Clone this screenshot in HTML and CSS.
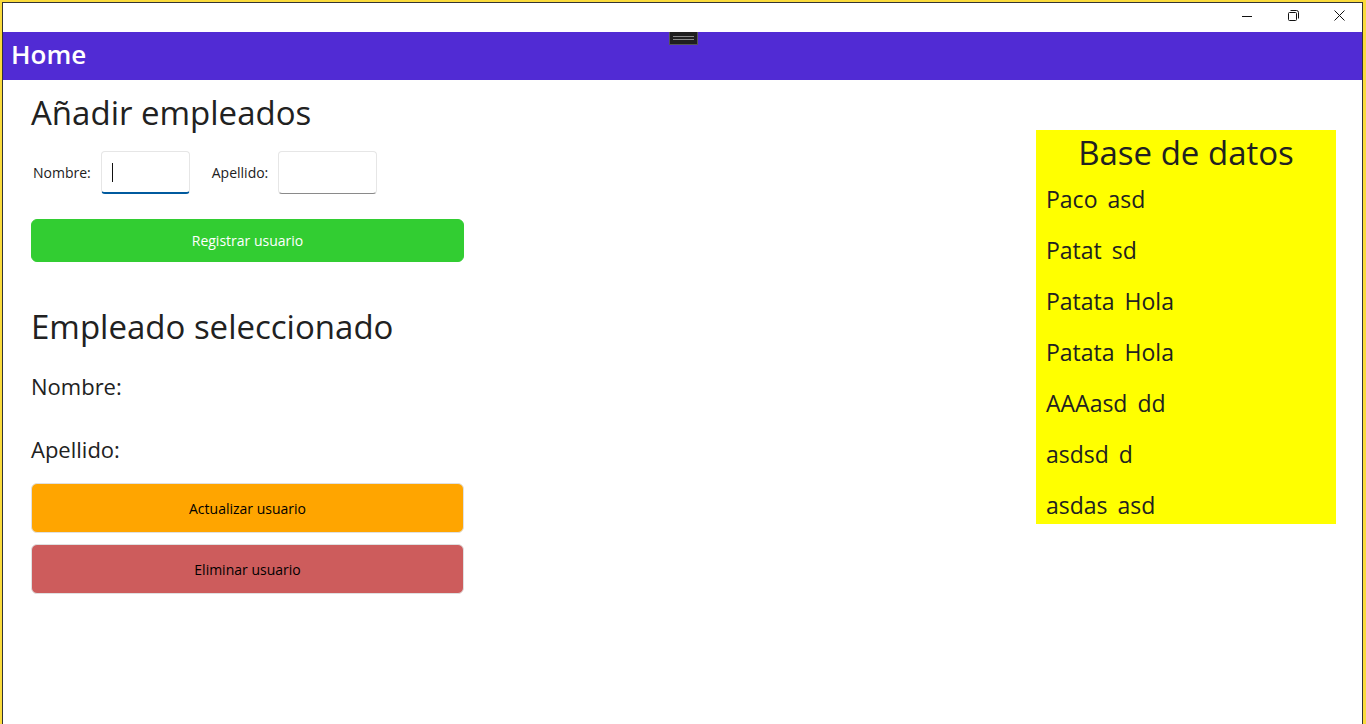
FILE: index.html
```html
<!DOCTYPE html>
<html lang="es">
<head>
<meta charset="utf-8">
<title>Home</title>
<link rel="stylesheet" href="styles.css">
</head>
<body>
<div class="frame">
  <div class="window">
    <div class="titlebar">
      <div class="controls">
        <span class="ctl">
          <svg width="10" height="10" viewBox="0 0 10 10"><path d="M0 5.5h10" stroke="#111" stroke-width="1"/></svg>
        </span>
        <span class="ctl">
          <svg width="11" height="11" viewBox="0 0 11 11" fill="none" stroke="#111" stroke-width="1"><rect x="0.5" y="2.5" width="8" height="8" rx="1"/><path d="M2.5 0.5h6a2 2 0 0 1 2 2v6"/></svg>
        </span>
        <span class="ctl">
          <svg width="11" height="11" viewBox="0 0 11 11" fill="none" stroke="#111" stroke-width="1"><path d="M0.5 0.5l10 10M10.5 0.5l-10 10"/></svg>
        </span>
      </div>
    </div>
    <div class="navbar">
      <span class="nav-title">Home</span>
      <span class="handle"><span class="grip"></span></span>
    </div>
    <div class="content">
      <div class="left">
        <h1 class="heading">Añadir empleados</h1>
        <div class="form-row">
          <label class="lbl">Nombre:</label>
          <div class="input focused"><span class="caret"></span></div>
          <label class="lbl lbl2">Apellido:</label>
          <div class="input wide"></div>
        </div>
        <button class="btn btn-green">Registrar usuario</button>
        <h1 class="heading heading2">Empleado seleccionado</h1>
        <p class="field">Nombre:</p>
        <p class="field field2">Apellido:</p>
        <button class="btn btn-tall btn-orange">Actualizar usuario</button>
        <button class="btn btn-tall btn-red">Eliminar usuario</button>
      </div>
      <div class="db">
        <div class="db-title">Base de datos</div>
        <ul class="db-list">
          <li><span>Paco</span><span>asd</span></li>
          <li><span>Patat</span><span>sd</span></li>
          <li><span>Patata</span><span>Hola</span></li>
          <li><span>Patata</span><span>Hola</span></li>
          <li><span>AAAasd</span><span>dd</span></li>
          <li><span>asdsd</span><span>d</span></li>
          <li><span>asdas</span><span>asd</span></li>
        </ul>
      </div>
    </div>
  </div>
</div>
</body>
</html>
```
FILE: styles.css
```css
* { box-sizing: border-box; }
html, body { margin: 0; padding: 0; }
body {
  width: 1366px;
  height: 724px;
  overflow: hidden;
  background: #fadb3c;
  font-family: "Open Sans", "Noto Sans", sans-serif;
  color: #212121;
}
.frame {
  height: 724px;
  padding: 2px 3px 0 2px;
}
.window {
  height: 100%;
  background: #fff;
  border-top: 1px solid #333;
  border-left: 1px solid #333;
  border-right: 1px solid #333;
  display: flex;
  flex-direction: column;
}
.titlebar {
  height: 29px;
  display: flex;
  justify-content: flex-end;
}
.controls { display: flex; }
.ctl {
  width: 46px;
  height: 29px;
  display: flex;
  align-items: center;
  justify-content: center;
}
.ctl svg { margin-top: -4px; }
.navbar {
  height: 48px;
  background: #512bd4;
  display: flex;
  align-items: center;
  padding-left: 8px;
  position: relative;
}
.nav-title {
  color: #fff;
  font-size: 26px;
  font-weight: 600;
  margin-top: -5px;
}
.handle {
  position: absolute;
  left: 666px;
  top: 0;
  width: 29px;
  height: 13px;
  background: #1f1f1f;
  border: 1px solid #555;
  border-top: none;
  display: flex;
  align-items: center;
  justify-content: center;
}
.grip {
  width: 21px;
  height: 4px;
  border-top: 1px solid #8a8a8a;
  border-bottom: 1px solid #8a8a8a;
}
.content {
  flex: 1;
  display: flex;
  justify-content: space-between;
  padding: 0 26px 0 28px;
}
.left {
  width: 433px;
  display: flex;
  flex-direction: column;
  align-items: flex-start;
}
.heading {
  margin: 13px 0 0 0;
  font-size: 33px;
  font-weight: 400;
  line-height: 40px;
}
.heading2 { margin-top: 45px; }
.form-row {
  display: flex;
  align-items: center;
  margin-top: 18px;
  padding-left: 2px;
}
.lbl { font-size: 14px; }
.lbl2 { margin-left: 22px; }
.input {
  width: 89px;
  height: 43px;
  margin-left: 10px;
  border: 1px solid #e6e6e6;
  border-bottom: 1px solid #8a8a8a;
  border-radius: 4px;
  background: #fff;
  display: flex;
  align-items: center;
  padding-left: 10px;
  flex: none;
}
.input.focused { border-bottom: 2px solid #005a9e; }
.input.wide { width: 99px; }
.caret {
  width: 1px;
  height: 19px;
  background: #111;
}
.btn {
  width: 433px;
  height: 43px;
  border: 1px solid #e0e0e0;
  border-radius: 6px;
  font-family: inherit;
  font-size: 14px;
  padding: 0;
  margin-top: 25px;
  flex: none;
}
.btn-green { background: #32cd32; color: #fff; border-color: #32cd32; }
.btn-tall { height: 50px; margin-top: 11px; }
.btn-orange { background: #ffa500; color: #000; margin-top: 19px; }
.btn-red { background: #cd5c5c; color: #000; }
.field {
  margin: 24px 0 0 0;
  font-size: 22px;
  line-height: 30px;
}
.field2 { margin-top: 33px; }
.db {
  width: 300px;
  height: 394px;
  margin-top: 50px;
  background: #ffff00;
  padding: 0 10px;
}
.db-title {
  text-align: center;
  font-size: 33px;
  line-height: 46px;
}
.db-list {
  list-style: none;
  margin: 8px 0 0 0;
  padding: 0;
}
.db-list li {
  font-size: 23px;
  line-height: 30px;
  margin-bottom: 21px;
  display: flex;
  gap: 10px;
}
```
